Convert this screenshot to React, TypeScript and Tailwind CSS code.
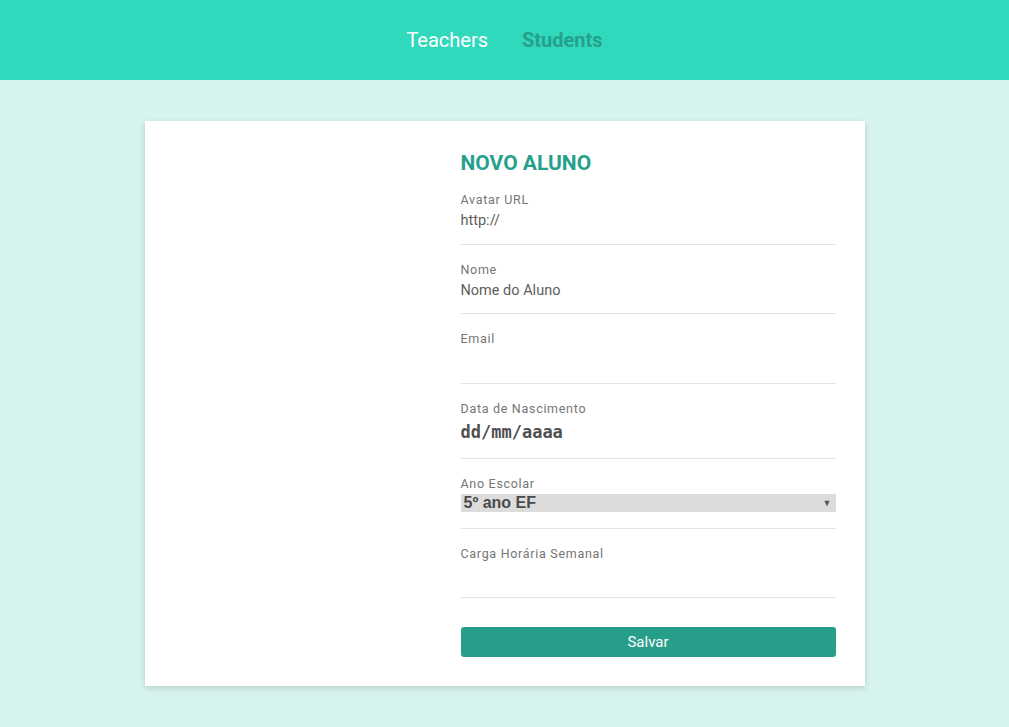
import React from "react";

const Label = ({ children }: { children: React.ReactNode }) => (
  <div className="h-4 text-[12.5px] leading-4 tracking-[0.7px] text-[#757575]">{children}</div>
);

export default function App() {
  return (
    <div className="min-h-[727px] bg-[#d7f3ed] font-['Roboto',sans-serif]">
      <header className="h-20 bg-[#30d9bc] flex items-center justify-center gap-[34px]">
        <a className="text-[20px] text-white leading-6">Teachers</a>
        <a className="text-[20px] font-bold text-[#25a08a] leading-6">Students</a>
      </header>
      <main className="flex justify-center pt-[41px] pb-10">
        <div className="w-[720px] bg-white shadow-[0_2px_6px_rgba(0,0,0,0.15)] flex pt-[30px] pb-[29px] pr-[29px]">
          <div className="w-[316px] shrink-0" />
          <form className="flex-1 flex flex-col" onSubmit={(e) => e.preventDefault()}>
            <h1 className="text-[21px] leading-6 font-bold text-[#26a08a]">NOVO ALUNO</h1>
            <div className="pt-[17px] pb-[12px] border-b border-[#e2e2e2]">
              <Label>Avatar URL</Label>
              <div className="h-6 pt-[3px] text-[14.5px] leading-5 text-[#5e5e5e]">http://</div>
            </div>
            <div className="pt-[17px] pb-[11px] border-b border-[#e2e2e2]">
              <Label>Nome</Label>
              <div className="h-6 pt-[3px] text-[14.5px] leading-5 text-[#5e5e5e]">Nome do Aluno</div>
            </div>
            <div className="pt-[17px] pb-[12px] border-b border-[#e2e2e2]">
              <Label>Email</Label>
              <div className="h-6" />
            </div>
            <div className="pt-[17px] pb-[13px] border-b border-[#e2e2e2]">
              <Label>Data de Nascimento</Label>
              <div className="h-[28px] pt-[5px] font-['DejaVu_Sans_Mono',monospace] font-bold text-[17px] leading-5 text-[#505050]">
                dd/mm/aaaa
              </div>
            </div>
            <div className="pt-[17px] pb-[16px] border-b border-[#e2e2e2]">
              <Label>Ano Escolar</Label>
              <div className="mt-[2px] h-[18px] bg-[#dcdcdc] flex items-center justify-between pl-[3px] pr-[4px]">
                <span className="font-['Liberation_Sans',sans-serif] font-bold text-[16px] leading-[18px] text-[#4a4a4a]">5º ano EF</span>
                <span className="text-[9px] text-[#555] leading-none">▼</span>
              </div>
            </div>
            <div className="pt-[17px] pb-[11px] border-b border-[#e2e2e2]">
              <Label>Carga Horária Semanal</Label>
              <div className="h-6" />
            </div>
            <button
              type="submit"
              className="mt-[29px] h-[30px] rounded-[3px] bg-[#279e8a] text-white text-[15px] font-['Roboto',sans-serif]"
            >
              Salvar
            </button>
          </form>
        </div>
      </main>
    </div>
  );
}
